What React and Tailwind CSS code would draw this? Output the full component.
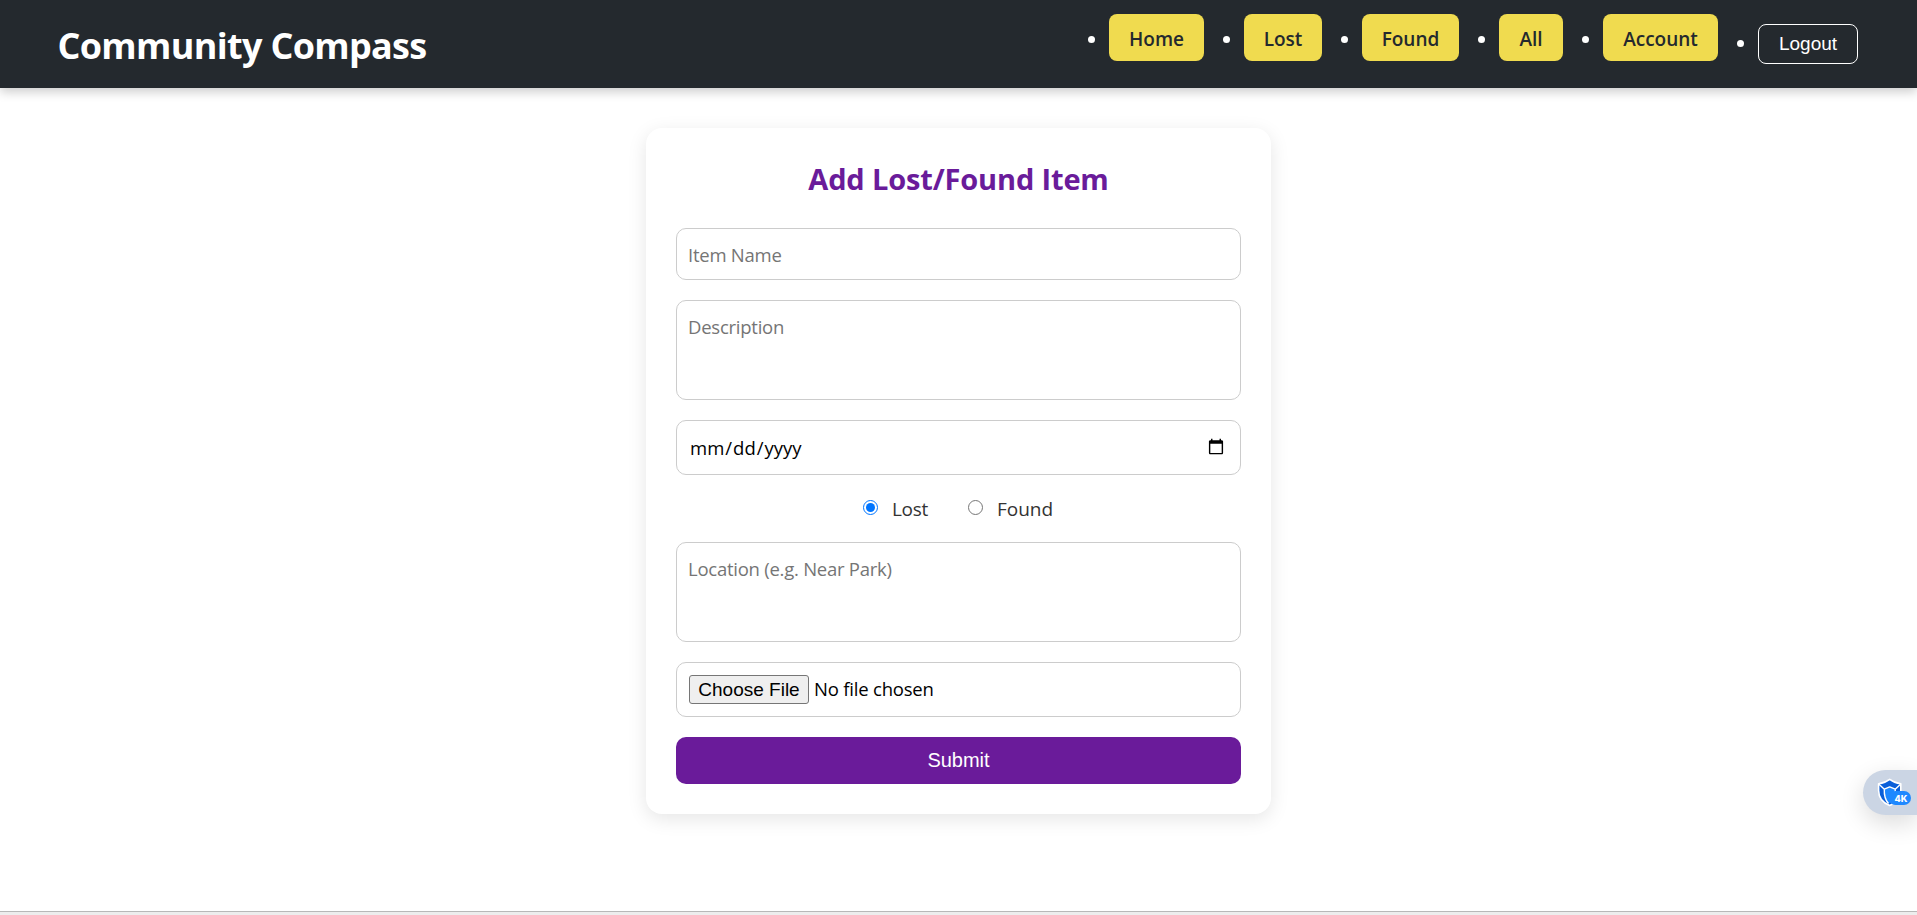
import clsx from "clsx";

const links = [
  { label: "Home", width: "w-[95px]" },
  { label: "Lost", width: "w-[78px]" },
  { label: "Found", width: "w-[97px]" },
  { label: "All", width: "w-[64px]" },
  { label: "Account", width: "w-[115px]" },
];

const field =
  "block w-full rounded-[10px] border border-[#ccc] bg-white text-[18.5px] placeholder:text-[#757575] outline-none";
const textField = "px-[11px] tracking-[-0.25px]";

function Bullet() {
  return <span className="mr-3.5 size-[7px] rounded-full bg-white" />;
}

function Header() {
  return (
    <header className="flex h-[88px] items-start justify-between bg-[#24292e] pl-[57.5px] pr-[59px] text-white shadow-[0_4px_10px_rgba(0,0,0,0.2)]">
      <h1 className="pt-[22px] text-[36px] leading-[48px] font-bold tracking-[-0.68px]">
        Community Compass
      </h1>
      <ul className="flex items-start gap-[19px] pt-3.5">
        {links.map(({ label, width }) => (
          <li key={label} className="flex h-[51px] items-center">
            <Bullet />
            <a
              className={clsx(
                "flex h-[47px] items-center justify-center self-start rounded-lg bg-[#f0db4f] pt-1 text-[19px] font-semibold text-[#24292e]",
                width
              )}
            >
              {label}
            </a>
          </li>
        ))}
        <li className="mt-2.5 flex h-10 items-center">
          <span className="-mt-px flex">
            <Bullet />
          </span>
          <button className="flex h-10 w-[100px] items-center justify-center rounded-lg border border-white font-['Liberation_Sans',Arial,sans-serif] text-[19px]">
            Logout
          </button>
        </li>
      </ul>
    </header>
  );
}

function ItemForm() {
  return (
    <form className="mt-10 h-[686px] w-[625px] rounded-2xl bg-white px-[30px] shadow-[0_5px_19px_rgba(0,0,0,0.1)]">
      <h2 className="pt-[30px] text-center text-[29px] leading-[42px] font-bold tracking-[-0.15px] text-[#6a1b9a]">
        Add Lost/Found Item
      </h2>
      <input className={clsx(field, textField, "mt-7 h-[52px]")} placeholder="Item Name" />
      <textarea
        className={clsx(field, textField, "mt-5 h-[100px] resize-none pt-[13px] leading-[25px]")}
        placeholder="Description"
      />
      <input type="date" lang="en-US" className={clsx(field, "mt-5 h-[55px] pr-[13px] pl-3")} />
      <div className="mt-5 flex h-[47px] text-[19px] text-[#333]">
        <label className="ml-[187px] flex h-[26px] items-center">
          <input type="radio" name="kind" defaultChecked className="mb-px size-[15px]" />
          <span className="ml-3.5 pt-[3px] tracking-[-0.3px]">Lost</span>
        </label>
        <label className="ml-10 flex h-[26px] items-center">
          <input type="radio" name="kind" className="mb-px size-[15px]" />
          <span className="ml-3.5 pt-[3px]">Found</span>
        </label>
      </div>
      <textarea
        className={clsx(field, textField, "h-[100px] resize-none pt-[13px] leading-[25px]")}
        placeholder="Location (e.g. Near Park)"
      />
      <input
        type="file"
        className={clsx(
          field,
          "mt-5 h-[55px] px-3 pt-3 tracking-[-0.2px] file:mr-[5px] file:h-[29px] file:w-[120px] file:rounded-[3px] file:border file:border-[#767676] file:bg-[#efefef] file:p-0 file:font-['Liberation_Sans',Arial,sans-serif] file:text-[19px] file:tracking-normal"
        )}
      />
      <button className="mt-5 flex h-[47px] w-full items-center justify-center rounded-[10px] bg-[#6a1b9a] pb-px font-['Liberation_Sans',Arial,sans-serif] text-xl text-white">
        Submit
      </button>
    </form>
  );
}

function UpscaleBadge() {
  return (
    <div className="absolute top-[770px] right-0 h-[45px] w-[54px] rounded-l-full bg-[#cbd5e4] shadow-[0_8px_24px_rgba(0,0,0,0.14)]">
      <svg viewBox="0 0 54 45" className="size-full">
        <path
          d="M26.700 9.300C29.500 11.500 33 13 37.800 13.700V20.500C37.800 28 33.500 32.800 26.700 35.500C20 32.800 15.600 28 15.600 20.500V13.700C20.400 13 23.900 11.500 26.700 9.300z"
          fill="#0a5fd9"
          stroke="#fff"
          strokeWidth="1.6"
          strokeLinejoin="round"
        />
        <path d="M21.300 19.200C21 25 22 29.500 25.500 33.500L32.200 30V19.200L26.700 16.900z" fill="#1e88ff" />
        <path
          d="M16 14.200 21.300 19.200 26.700 16.900 32.200 19.200 37.500 14.200M21.300 19.200C21 25 22 29.500 25.500 33.500M32.200 19.200V23"
          fill="none"
          stroke="#fff"
          strokeWidth="1.4"
          strokeLinejoin="round"
        />
        <rect x="25.500" y="21" width="22.500" height="14" rx="7" fill="#1e88ff" />
        <text
          x="38"
          y="31.700"
          textAnchor="middle"
          fill="#fff"
          className="font-['Inter',sans-serif] text-[9px] font-extrabold"
        >
          4K
        </text>
      </svg>
    </div>
  );
}

export default function App() {
  return (
    <div className="relative flex h-[915px] flex-col overflow-hidden bg-white font-['Open_Sans','Noto_Sans',sans-serif] text-black">
      <Header />
      <main className="flex flex-1 justify-center">
        <ItemForm />
      </main>
      <footer className="h-1 border-t border-[#b8b8b8] bg-[#ededed]" />
      <UpscaleBadge />
    </div>
  );
}
